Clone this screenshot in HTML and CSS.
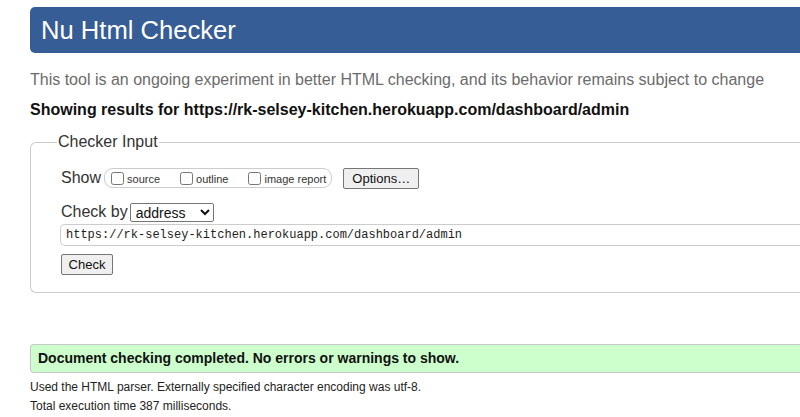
FILE: index.html
```html
<!DOCTYPE html>
<html lang="en">
<head>
<meta charset="utf-8">
<title>Nu Html Checker</title>
<link rel="stylesheet" href="styles.css">
</head>
<body>
<div class="page">
  <h1 class="banner">Nu Html Checker</h1>
  <p class="intro">This tool is an ongoing experiment in better HTML checking, and its behavior remains subject to change</p>
  <p class="results">Showing results for https://rk-selsey-kitchen.herokuapp.com/dashboard/admin</p>
  <form class="checker">
    <fieldset class="fs">
      <legend class="legend">Checker Input</legend>
      <div class="row show-row">
        <span class="label">Show</span>
        <span class="group">
          <label class="opt"><input type="checkbox" class="cb">source</label>
          <label class="opt"><input type="checkbox" class="cb">outline</label>
          <label class="opt"><input type="checkbox" class="cb">image report</label>
        </span>
        <button type="button" class="btn options">Options…</button>
      </div>
      <div class="row by-row">
        <span class="label">Check by</span>
        <select class="sel"><option>address</option></select>
      </div>
      <input class="url" type="text" value="https://rk-selsey-kitchen.herokuapp.com/dashboard/admin">
      <div class="row">
        <button type="button" class="btn check">Check</button>
      </div>
    </fieldset>
  </form>
  <p class="success">Document checking completed. No errors or warnings to show.</p>
  <p class="details">Used the HTML parser. Externally specified character encoding was utf-8.</p>
  <p class="details">Total execution time 387 milliseconds.</p>
</div>
</body>
</html>
```
FILE: styles.css
```css
html, body {
  margin: 0;
  padding: 0;
  overflow: hidden;
  background: #fff;
}
body {
  font-family: "Liberation Sans", Arial, sans-serif;
  color: #222;
}
.page {
  width: 1000px;
  padding: 7px 0 0 30px;
}
.banner {
  margin: 0;
  height: 46px;
  line-height: 46px;
  padding-left: 11px;
  background: #365d95;
  color: #fff;
  font-size: 25.6px;
  font-weight: normal;
  border-radius: 5px 0 0 5px;
}
.intro {
  margin: 18px 0 0;
  font-size: 16px;
  line-height: 18px;
  color: #6b6b6b;
}
.results {
  margin: 12px 0 0;
  font-size: 16px;
  line-height: 18px;
  font-weight: bold;
  color: #111;
}
.checker {
  margin: 14px 0 0;
}
.fs {
  margin: 0;
  border: 1px solid #ccc;
  border-right: none;
  border-radius: 6px 0 0 6px;
  padding: 16px 0 17px 30px;
}
.legend {
  margin-left: -4px;
  padding: 0 1px;
  font-size: 16px;
  line-height: 18px;
  color: #333;
}
.row {
  display: flex;
  align-items: center;
}
.show-row {
  height: 22px;
}
.label {
  font-size: 16px;
  color: #333;
}
.group {
  display: flex;
  align-items: center;
  margin-left: 3px;
  height: 18px;
  border: 1px solid #ccc;
  border-radius: 9px;
  padding: 0 5px 0 2px;
}
.opt {
  display: flex;
  align-items: center;
  font-size: 11px;
  color: #333;
  margin-right: 16px;
  padding-top: 2px;
}
.opt:last-child {
  margin-right: 0;
}
.cb {
  width: 13px;
  height: 13px;
  margin: -2px 3px 0 4px;
}
.btn {
  font-family: "Liberation Sans", Arial, sans-serif;
  font-size: 13px;
  color: #111;
  background: #efefef;
  border: 1px solid #767676;
  border-radius: 2px;
  padding: 0;
  height: 21px;
}
.options {
  width: 76px;
  margin-left: 11px;
}
.by-row {
  margin-top: 13px;
  height: 20px;
}
.sel {
  margin-left: 2px;
  width: 84px;
  height: 19px;
  font-family: "Liberation Sans", Arial, sans-serif;
  font-size: 14px;
  color: #111;
  border: 1px solid #767676;
  border-radius: 2px;
  background: #fff;
  padding: 0 0 0 1px;
}
.url {
  display: block;
  box-sizing: border-box;
  margin: 2px 0 0 -1px;
  width: 960px;
  height: 22px;
  border: 1px solid #ccc;
  border-right: none;
  border-radius: 5px 0 0 5px;
  padding: 0 0 0 5px;
  font-family: "Liberation Mono", "DejaVu Sans Mono", monospace;
  font-size: 12px;
  color: #222;
}
.row .check {
  width: 52px;
  height: 21px;
  margin-top: 8px;
}
.success {
  margin: 51px 0 0;
  height: 27px;
  line-height: 27px;
  background: #ccffcc;
  border: 1px solid #c8c8c8;
  border-right: none;
  border-radius: 4px 0 0 4px;
  padding-left: 7px;
  font-size: 14px;
  font-weight: bold;
  color: #111;
}
.details {
  margin: 0;
  font-size: 12px;
  line-height: 19px;
  color: #222;
}
.success + .details {
  margin-top: 5px;
}
```
